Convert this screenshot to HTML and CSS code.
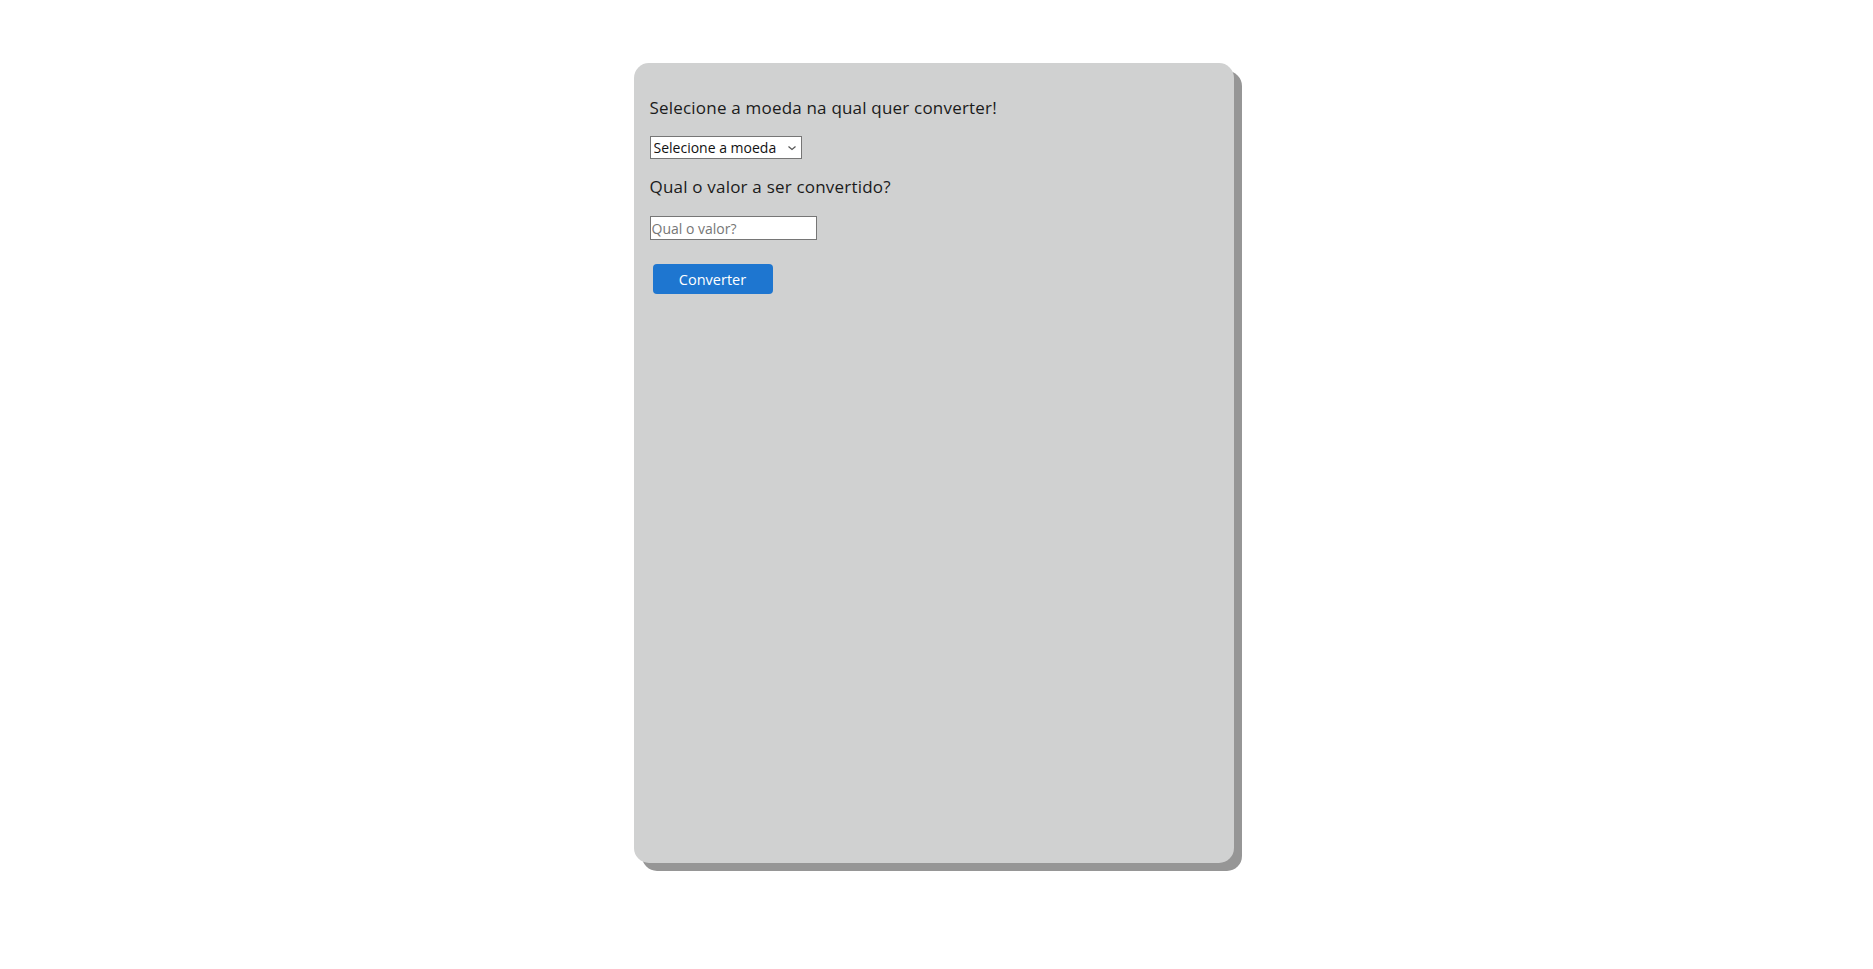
FILE: index.html
```html
<!DOCTYPE html>
<html lang="pt-BR">
<head>
<meta charset="utf-8">
<title>Conversor de moedas</title>
<link rel="stylesheet" href="styles.css">
</head>
<body>
<main class="card">
  <p class="label">Selecione a moeda na qual quer converter!</p>
  <select class="currency">
    <option>Selecione a moeda</option>
    <option>Dólar</option>
    <option>Euro</option>
  </select>
  <p class="label">Qual o valor a ser convertido?</p>
  <input class="amount" type="text" placeholder="Qual o valor?">
  <button class="convert" type="button">Converter</button>
</main>
</body>
</html>
```
FILE: styles.css
```css
html, body {
  margin: 0;
  padding: 0;
  background: #ffffff;
}

body {
  font-family: "Open Sans", "Liberation Sans", sans-serif;
  color: #1b1b1b;
  padding: 63px 0 60px;
  min-height: 100vh;
  box-sizing: border-box;
}

.card {
  box-sizing: border-box;
  width: 600px;
  height: 800px;
  margin: 0 auto;
  position: relative;
  left: -3px;
  background: #d0d1d1;
  border-radius: 15px;
  box-shadow: 8px 8px 0 #969696;
  padding: 35px 16px;
  display: flex;
  flex-direction: column;
  align-items: flex-start;
}

.label {
  margin: 0;
  font-size: 17px;
  line-height: 20px;
  letter-spacing: 0.2px;
}

.currency {
  appearance: none;
  -webkit-appearance: none;
  margin: 18px 0 18px;
  height: 23px;
  width: 152px;
  font-family: inherit;
  font-size: 14px;
  color: #111;
  background: #fff url("data:image/svg+xml;utf8,<svg xmlns='http://www.w3.org/2000/svg' width='10' height='6' viewBox='0 0 10 6'><path d='M1.5 1.5 L5 4.5 L8.5 1.5' fill='none' stroke='%23555' stroke-width='1.2'/></svg>") no-repeat right 4px center;
  border: 1px solid #767676;
  border-radius: 0;
  padding: 0 14px 0 3px;
}

.amount {
  margin-top: 19px;
  box-sizing: border-box;
  width: 167px;
  height: 24px;
  font-family: inherit;
  font-size: 14px;
  border: 1px solid #767676;
  padding: 0 1px;
  background: #fff;
}

.amount::placeholder {
  color: #767676;
}

.convert {
  margin: 24px 0 0 3px;
  width: 120px;
  height: 30px;
  border: none;
  border-radius: 4px;
  background: #1e76d0;
  color: #fff;
  font-family: inherit;
  font-size: 14.5px;
  font-weight: 500;
}
```
